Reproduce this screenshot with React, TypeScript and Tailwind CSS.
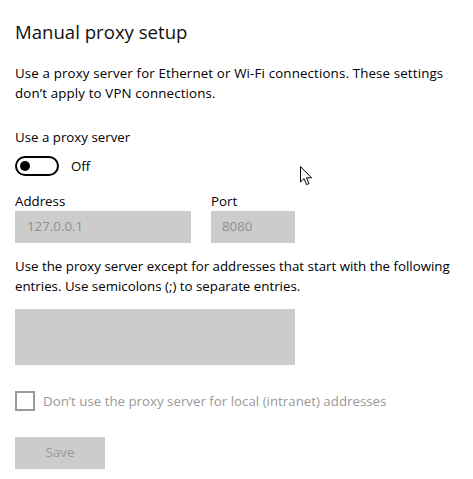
import React from "react";

export default function App() {
  return (
    <div
      className="relative w-[473px] h-[479px] overflow-hidden bg-white text-black"
      style={{ fontFamily: "'Open Sans', 'Noto Sans', sans-serif" }}
    >
      <div className="flex flex-col pl-[15px] pt-[18px]">
        <h1 className="text-[18.6px] leading-[28px] font-normal text-[#111111]">Manual proxy setup</h1>

        <p className="mt-[17px] whitespace-nowrap text-[13.3px] leading-[20px] tracking-[0.15px]">
          Use a proxy server for Ethernet or Wi-Fi connections. These settings
          <br />
          don’t apply to VPN connections.
        </p>

        <div className="mt-[24px] text-[13.3px] leading-[20px]">Use a proxy server</div>

        <div className="mt-[9px] flex items-center gap-[12px]">
          <div className="flex h-[20px] w-[44px] items-center rounded-full border-2 border-black px-[3px]">
            <div className="h-[10px] w-[10px] rounded-full bg-black" />
          </div>
          <span className="text-[13.3px] leading-[20px]">Off</span>
        </div>

        <div className="mt-[15px] flex gap-[20px]">
          <div className="flex flex-col">
            <label className="text-[13.3px] leading-[20px]">Address</label>
            <div className="flex h-[32px] w-[176px] items-center bg-[#cccccc] px-[12px] text-[13.3px] text-[#8f8f8f]">
              127.0.0.1
            </div>
          </div>
          <div className="flex flex-col">
            <label className="text-[13.3px] leading-[20px]">Port</label>
            <div className="flex h-[32px] w-[84px] items-center bg-[#cccccc] px-[11px] text-[13.3px] text-[#8f8f8f]">
              8080
            </div>
          </div>
        </div>

        <p className="mt-[13px] whitespace-nowrap text-[13.3px] leading-[20px]">
          Use the proxy server except for addresses that start with the following
          <br />
          entries. Use semicolons (;) to separate entries.
        </p>

        <div className="mt-[13px] h-[56px] w-[280px] bg-[#cccccc]" />

        <div className="mt-[26px] flex items-center gap-[8px]">
          <div className="h-[20px] w-[20px] border-2 border-[#999999]" />
          <span className="text-[13.3px] leading-[20px] text-[#999999]">
            Don’t use the proxy server for local (intranet) addresses
          </span>
        </div>

        <button className="mt-[26px] flex h-[32px] w-[90px] items-center justify-center bg-[#cccccc] text-[13.3px] text-[#999999]">
          Save
        </button>
      </div>

      <svg
        className="absolute left-[300px] top-[166px]"
        width="13"
        height="20"
        viewBox="0 0 13 20"
      >
        <path
          d="M0.5 0.5 L0.5 16 L4 12.6 L6.6 18.6 L9 17.6 L6.5 11.8 L11.5 11.8 Z"
          fill="white"
          stroke="black"
          strokeWidth="1"
          strokeLinejoin="miter"
        />
      </svg>
    </div>
  );
}
